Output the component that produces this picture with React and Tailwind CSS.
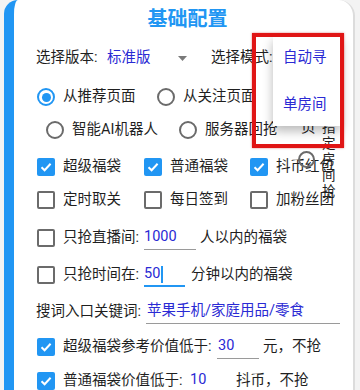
import React from 'react';

const BLUE = 'text-[#2a2ad4]';

const Radio = ({ checked }) => (
  <span
    className={`flex h-[18px] w-[18px] shrink-0 items-center justify-center rounded-full border-2 ${
      checked ? 'border-[#2196f3]' : 'border-[#6b6b6b]'
    }`}
  >
    {checked && <span className="h-[9px] w-[9px] rounded-full bg-[#2196f3]" />}
  </span>
);

const Check = ({ checked }) =>
  checked ? (
    <span className="flex h-[18px] w-[18px] shrink-0 items-center justify-center rounded-[2px] bg-[#2196f3]">
      <svg width="14" height="14" viewBox="0 0 14 14" fill="none">
        <path d="M2.5 7.2 L5.6 10.2 L11.6 3.8" stroke="white" strokeWidth="2" />
      </svg>
    </span>
  ) : (
    <span className="h-[18px] w-[18px] shrink-0 rounded-[2px] border-2 border-[#6b6b6b]" />
  );

const Option = ({ w, children, radio, checked }) => (
  <span className={`flex shrink-0 items-center gap-[8px] ${w}`}>
    {radio ? <Radio checked={checked} /> : <Check checked={checked} />}
    <span>{children}</span>
  </span>
);

const Field = ({ w, children, focused }) => (
  <span
    className={`flex h-[24px] shrink-0 items-center ${w} ${BLUE} ${
      focused ? 'border-b-2 border-[#2196f3]' : 'border-b border-[#9a9a9a]'
    }`}
  >
    {children}
  </span>
);

export default function App() {
  return (
    <div
      className="min-h-screen overflow-hidden bg-[#f3f3f3] pl-[4px] text-[14.5px] leading-none text-[#1f1f1f]"
      style={{ fontFamily: 'Roboto, "Noto Sans CJK SC", sans-serif' }}
    >
      <div className="relative h-[390px] w-[351px] overflow-hidden rounded-tl-[14px] rounded-tr-[16px] border-l-[10px] border-r-2 border-l-[#2196f3] border-r-[#dcdcdc] bg-white pl-[22px]">
        {/* title */}
        <div className="flex h-[31px] items-end justify-center pr-[14px]">
          <span className="text-[20px] font-semibold leading-[24px] text-[#2196f3]">基础配置</span>
        </div>

        {/* version / mode */}
        <div className="mt-[15px] flex h-[24px] items-center">
          <span className="w-[71px] shrink-0">选择版本:</span>
          <span className={`w-[71px] shrink-0 ${BLUE}`}>标准版</span>
          <svg width="9" height="5" viewBox="0 0 9 5" className="shrink-0">
            <path d="M0 0 H9 L4.5 5 Z" fill="#7a7a7a" />
          </svg>
          <span className="ml-[24px] shrink-0">选择模式:</span>
        </div>

        {/* source radios */}
        <div className="mt-[15px] flex h-[24px] items-center pl-[1px]">
          <Option radio checked w="w-[120px]">从推荐页面</Option>
          <Option radio w="w-[120px]">从关注页面</Option>
        </div>
        <div className="mt-[9px] flex h-[24px] items-center pl-[10px]">
          <Option radio w="w-[133px]">智能AI机器人</Option>
          <Option radio w="w-[120px]">服务器回抢</Option>
        </div>

        {/* feature checkboxes */}
        <div className="mt-[13px] flex h-[24px] items-center pl-[1px]">
          <Option checked w="w-[107px]">超级福袋</Option>
          <Option checked w="w-[106px]">普通福袋</Option>
          <Option checked w="w-[100px]">抖币红包</Option>
        </div>
        <div className="mt-[9px] flex h-[24px] items-center pl-[1px]">
          <Option w="w-[107px]">定时取关</Option>
          <Option w="w-[106px]">每日签到</Option>
          <Option w="w-[100px]">加粉丝团</Option>
        </div>

        {/* limits */}
        <div className="mt-[14px] flex h-[24px] items-center pl-[1px]">
          <Check />
          <span className="ml-[8px] w-[81px] shrink-0">只抢直播间:</span>
          <Field w="w-[52px]">1000</Field>
          <span className="ml-[4px] shrink-0">人以内的福袋</span>
        </div>
        <div className="mt-[13px] flex h-[24px] items-center pl-[1px]">
          <Check />
          <span className="ml-[8px] w-[81px] shrink-0">只抢时间在:</span>
          <Field w="w-[41px]" focused>
            50<span className="ml-[1px] h-[17px] w-[1.5px] bg-[#2196f3]" />
          </Field>
          <span className="ml-[6px] shrink-0">分钟以内的福袋</span>
        </div>
        <div className="mt-[13px] flex h-[24px] items-center">
          <span className="w-[110px] shrink-0">搜词入口关键词:</span>
          <Field w="w-[194px] pl-[1px]">苹果手机/家庭用品/零食</Field>
        </div>
        <div className="mt-[11px] flex h-[24px] items-center pl-[1px]">
          <Check checked />
          <span className="ml-[8px] w-[154px] shrink-0">超级福袋参考价值低于:</span>
          <Field w="w-[42px] pl-[1px]">30</Field>
          <span className="ml-[4px] shrink-0">元，不抢</span>
        </div>
        <div className="mt-[10px] flex h-[24px] items-center pl-[1px]">
          <Check checked />
          <span className="ml-[8px] w-[127px] shrink-0">普通福袋价值低于:</span>
          <Field w="w-[42px]">10</Field>
          <span className="ml-[4px] shrink-0">抖币，不抢</span>
        </div>

        {/* overflowing items behind the spinner popup */}
        <span className="absolute left-[287px] top-[121px]">页</span>
        <span className="absolute left-[284px] top-[151px] h-[17px] w-[17px] rounded-full border-2 border-[#6b6b6b]" />
        <div className="absolute left-[308px] top-[119px] flex flex-col text-[13.5px] leading-[16px]">
          <span>指</span>
          <span>定</span>
          <span>房</span>
          <span>间</span>
          <span>抢</span>
        </div>

        {/* spinner popup */}
        <div className={`absolute left-[259px] top-[36px] flex h-[90px] w-[68px] flex-col bg-white pl-[10px] pt-[12px] shadow-[0_5px_10px_rgba(0,0,0,0.28)] ${BLUE}`}>
          <span className="h-[20px] leading-[20px]">自动寻</span>
          <span className="mt-[27px] h-[20px] leading-[20px]">单房间</span>
        </div>

        {/* annotation */}
        <div className="absolute left-[238px] top-[33px] h-[115px] w-[92px] border-4 border-[#e01515] shadow-[0_0_2px_rgba(200,0,0,0.5)]" />
      </div>
    </div>
  );
}
